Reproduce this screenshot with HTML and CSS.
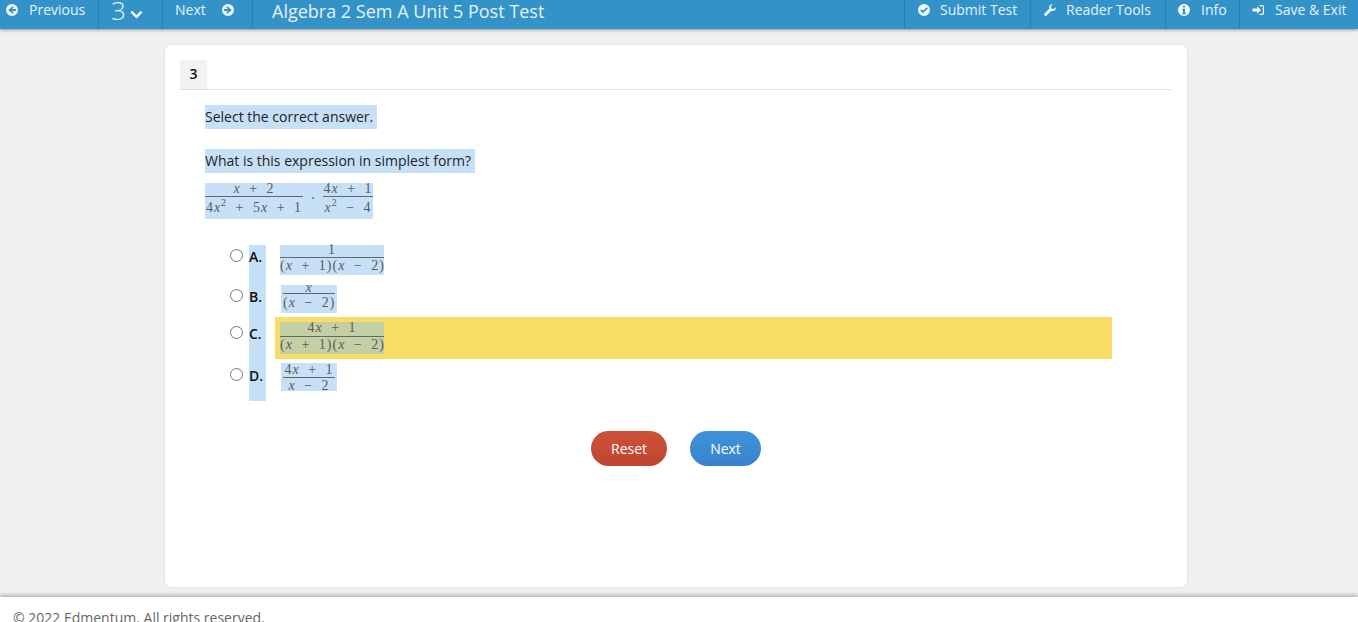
FILE: index.html
```html
<!DOCTYPE html>
<html lang="en">
<head>
    <meta charset="UTF-8">
    <title>Algebra 2 Sem A Unit 5 Post Test</title>
    <link rel="stylesheet" href="styles.css">
</head>
<body>
    <!-- Top bar -->
    <header class="topbar">
        <a class="nav-item nav-prev">
            <svg class="icon" viewBox="0 0 24 24"><path d="M12 0a12 12 0 1 0 0 24 12 12 0 0 0 0-24zm1 4.500 2.400 2.400-3.400 3.300h8v3.600h-8l3.400 3.300-2.400 2.400L4.500 12z"/></svg>
            <span>Previous</span>
        </a>
        <a class="nav-item nav-number">
            <span class="big-number">3</span>
            <svg class="chevron" viewBox="0 0 14 10"><path d="M1.500 2.500 7 8l5.500-5.500" fill="none" stroke="#fff" stroke-width="2.600"/></svg>
        </a>
        <a class="nav-item nav-next">
            <span>Next</span>
            <svg class="icon" viewBox="0 0 24 24"><path d="M12 0a12 12 0 1 1 0 24 12 12 0 0 1 0-24zm-1 4.500L8.600 6.900l3.400 3.300H4v3.600h8l-3.400 3.300 2.400 2.400L19.500 12z"/></svg>
        </a>
        <div class="nav-title">Algebra 2 Sem A Unit 5 Post Test</div>
        <a class="nav-item nav-submit">
            <svg class="icon" viewBox="0 0 24 24"><path d="M12 0a12 12 0 1 0 0 24 12 12 0 0 0 0-24zm-2 18.500L4.300 12.800l2.500-2.500 3.200 3.200 7.200-7.200 2.500 2.500z"/></svg>
            <span>Submit Test</span>
        </a>
        <a class="nav-item nav-tools">
            <svg class="icon" viewBox="0 0 24 24"><path d="M23.500 6.500c.4 3.200-1.800 7-6 7.300-1 .1-1.800 0-2.600-.3L5.800 22.700c-1.400 1.500-3.200 1.500-4.500.2s-1.200-3.100.2-4.500l9.200-9.100c-.4-.9-.5-1.800-.4-2.800C10.700 2.300 14.500 0 17.800.6l-4.200 4.200 1 4 4 1z"/></svg>
            <span>Reader Tools</span>
        </a>
        <a class="nav-item nav-info">
            <svg class="icon" viewBox="0 0 24 24"><path d="M12 0a12 12 0 1 0 0 24 12 12 0 0 0 0-24zm-2 3.500h4v3.700h-4zM8.500 9.500H14v8h1.500v3h-7v-3H10v-5H8.500z"/></svg>
            <span>Info</span>
        </a>
        <a class="nav-item nav-exit">
            <svg class="icon" viewBox="0 0 24 24"><path d="M10 4.500 18 12l-8 7.500V15H1V9h9zM15 2h5a4 4 0 0 1 4 4v12a4 4 0 0 1-4 4h-5v-2.500h5a1.500 1.500 0 0 0 1.500-1.500V6A1.500 1.500 0 0 0 20 4.500h-5z"/></svg>
            <span>Save &amp; Exit</span>
        </a>
    </header>

    <main class="page">
        <div class="card">
            <div class="question-head">
                <div class="question-tab">3</div>
            </div>

            <div class="question-body">
                <p class="line"><span class="hl">Select the correct answer.&nbsp;</span></p>
                <p class="line"><span class="hl">What is this expression in simplest form?&nbsp;</span></p>

                <div class="expression hl">
                    <span class="frac frac-e1">
                        <span class="num"><i>x</i> + 2</span>
                        <span class="den">4<i>x</i><sup>2</sup> + 5<i>x</i> + 1</span>
                    </span>
                    <span class="dot">·</span>
                    <span class="frac frac-e2">
                        <span class="num">4<i>x</i> + 1</span>
                        <span class="den"><i>x</i><sup>2</sup> − 4</span>
                    </span>
                </div>

                <!-- Opciones -->
                <div class="options">
                    <label class="option option-a">
                        <span class="radio-cell"><input type="radio" name="answer"></span>
                        <span class="letter">A.</span>
                        <span class="answer">
                            <span class="frac hl frac-wide">
                                <span class="num">1</span>
                                <span class="den">(<i>x</i> + 1)(<i>x</i> − 2)</span>
                            </span>
                        </span>
                    </label>
                    <label class="option option-b">
                        <span class="radio-cell"><input type="radio" name="answer"></span>
                        <span class="letter">B.</span>
                        <span class="answer">
                            <span class="frac hl frac-narrow">
                                <span class="num"><i>x</i></span>
                                <span class="den">(<i>x</i> − 2)</span>
                            </span>
                        </span>
                    </label>
                    <label class="option option-c">
                        <span class="radio-cell"><input type="radio" name="answer"></span>
                        <span class="letter">C.</span>
                        <span class="answer answer-marked">
                            <span class="frac hl frac-wide">
                                <span class="num">4<i>x</i> + 1</span>
                                <span class="den">(<i>x</i> + 1)(<i>x</i> − 2)</span>
                            </span>
                        </span>
                    </label>
                    <label class="option option-d">
                        <span class="radio-cell"><input type="radio" name="answer"></span>
                        <span class="letter">D.</span>
                        <span class="answer">
                            <span class="frac hl frac-narrow">
                                <span class="num">4<i>x</i> + 1</span>
                                <span class="den"><i>x</i> − 2</span>
                            </span>
                        </span>
                    </label>
                </div>
            </div>

            <div class="actions">
                <button class="btn btn-reset" type="button">Reset</button>
                <button class="btn btn-next" type="button">Next</button>
            </div>
        </div>
    </main>

    <footer class="footer">© 2022 Edmentum. All rights reserved.</footer>
</body>
</html>
```

FILE: styles.css
```css
* {
    box-sizing: border-box;
}
html, body {
    height: 622px;
    overflow: hidden;
}
body {
    margin: 0;
    background: #f0f0f0;
    color: #222;
    font-family: "Open Sans", sans-serif;
    font-size: 14px;
}

/* barra superior */
.topbar {
    display: flex;
    height: 29px;
    background: #3393c9;
    color: #e6f2f9;
    box-shadow: 0 1px 3px rgba(0, 0, 0, 0.4);
    position: relative;
}
.nav-item {
    display: flex;
    align-items: center;
    height: 29px;
    padding-bottom: 10px;
    border-left: 1px solid #2a7fb0;
}
.nav-item .icon {
    width: 12px;
    height: 12px;
    fill: #f2f8fc;
    flex: none;
}
.nav-prev {
    width: 98px;
    padding-left: 6px;
    gap: 11px;
    border-left: 0;
}
.nav-number {
    width: 64px;
    padding-left: 12px;
    gap: 4px;
}
.big-number {
    font-size: 26px;
    font-weight: 300;
    line-height: 29px;
    margin-top: 2px;
}
.chevron {
    width: 13px;
    height: 10px;
    margin-top: 9px;
}
.nav-next {
    width: 90px;
    padding-left: 12px;
    gap: 16px;
}
.nav-title {
    flex: 1;
    padding-left: 19px;
    border-left: 1px solid #2a7fb0;
    font-size: 18px;
    line-height: 22px;
}
.nav-submit {
    width: 126px;
    padding-left: 13px;
    gap: 10px;
}
.nav-tools {
    width: 135px;
    padding-left: 13px;
    gap: 10px;
}
.nav-info {
    width: 74px;
    padding-left: 12px;
    gap: 11px;
}
.nav-exit {
    width: 119px;
    padding-left: 12px;
    gap: 11px;
}

/* tarjeta */
.page {
    height: 568px;
    padding-top: 15px;
}
.card {
    width: 1024px;
    height: 544px;
    margin-left: 164px;
    padding: 15px 15px 0;
    background: #fff;
    border: 1px solid #e8e8e8;
    border-radius: 8px;
}
.question-head {
    height: 30px;
    border-bottom: 1px solid #e2e2e2;
}
.question-tab {
    width: 27px;
    height: 29px;
    background: #f2f2f2;
    color: #111;
    font-weight: 600;
    line-height: 28px;
    text-align: center;
}
.question-body {
    padding: 15px 0 0 25px;
}
.line {
    margin: 0 0 20px;
    line-height: 24px;
    height: 24px;
}
.hl {
    background: #c6e0f8;
}
.line .hl {
    display: inline-block;
}

/* fracciones */
.expression {
    display: inline-flex;
    align-items: flex-start;
    height: 36px;
    margin-top: -10px;
    vertical-align: top;
}
.frac {
    display: inline-flex;
    flex-direction: column;
    align-items: stretch;
    text-align: center;
    color: #5a5a5a;
    font-family: "Liberation Serif", serif;
    font-size: 14px;
    letter-spacing: 1px;
    word-spacing: 4px;
}
.num {
    display: block;
    border-bottom: 1px solid #666;
}
.den {
    display: block;
    white-space: nowrap;
}
.frac sup {
    font-size: 10px;
    line-height: 0;
}
.frac-e1 {
    width: 98px;
}
.frac-e2 {
    width: 50px;
}
.expression .num {
    height: 14px;
    line-height: 12px;
}
.expression .den {
    height: 22px;
    line-height: 22px;
}
.dot {
    width: 20px;
    line-height: 30px;
    text-align: center;
    color: #555;
}
.frac-wide {
    width: 104px;
}
.frac-narrow {
    width: 56px;
    margin-left: 1px;
    padding: 0 2px;
}

/* opciones */
.options {
    margin: 26px 0 0 24px;
}
.option {
    display: flex;
    width: 883px;
}
.radio-cell {
    width: 20px;
    flex: none;
}
.radio-cell input {
    display: block;
    width: 13px;
    height: 13px;
    margin: 4px 0 0 1px;
}
.letter {
    flex: none;
    width: 17px;
    background: #c6e0f8;
    color: #111;
    font-weight: 600;
    line-height: 24px;
}
.answer {
    display: flex;
    align-items: flex-start;
    margin-left: 9px;
    padding-left: 5px;
    flex: 1;
}
.option-a {
    height: 40px;
}
.option-a .num {
    height: 13px;
    line-height: 10px;
}
.option-a .den {
    height: 17px;
    line-height: 16px;
}
.option-b {
    height: 32px;
}
.option-b .num {
    height: 9px;
    line-height: 6px;
}
.option-b .den {
    height: 19px;
    line-height: 18px;
}
.option-c,
.option-d {
    height: 42px;
}
.option-c .num {
    height: 15px;
    line-height: 12px;
}
.option-c .den {
    height: 17px;
    line-height: 16px;
}
.option-d .num {
    height: 15px;
    line-height: 14px;
}
.option-d .den {
    height: 13px;
    line-height: 16px;
}
.option-c .radio-cell input,
.option-d .radio-cell input {
    margin-top: 9px;
}
.option-c .letter,
.option-d .letter {
    padding-top: 5px;
}
.option-c .answer {
    padding-top: 5px;
}
.option-d .answer {
    padding-top: 4px;
}
.answer-marked {
    background: #f7dc66;
}
.answer-marked .hl {
    background: #c4cfa6;
}

/* botones */
.actions {
    display: flex;
    margin: 30px 0 0 411px;
    gap: 23px;
}
.btn {
    height: 35px;
    padding: 0;
    border: 0;
    border-radius: 18px;
    color: #fff;
    font-family: "Open Sans", sans-serif;
    font-size: 14px;
}
.btn-reset {
    width: 76px;
    background: linear-gradient(#d0513a, #bf4530);
}
.btn-next {
    width: 71px;
    background: linear-gradient(#3f93db, #3783cc);
}

/* pie */
.footer {
    height: 25px;
    padding: 11px 0 0 13px;
    background: #fff;
    color: #666;
    line-height: 19px;
    box-shadow: 0 -2px 4px rgba(0, 0, 0, 0.25);
    position: relative;
}
```
